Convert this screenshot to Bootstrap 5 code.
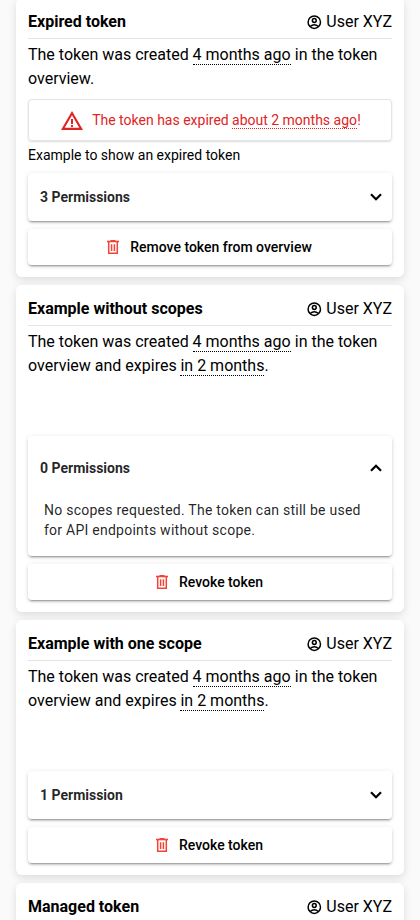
<!DOCTYPE html>
<html lang="en">
<head>
<meta charset="utf-8">
<meta name="viewport" content="width=device-width, initial-scale=1">
<title>Tokens</title>
<link href="https://cdn.jsdelivr.net/npm/bootstrap@5.3.0/dist/css/bootstrap.min.css" rel="stylesheet">
<style>
  html, body { height: 920px; overflow: hidden; }
  body { background: #fafafa; color: #000; font-family: Roboto, "Liberation Sans", sans-serif; font-size: 16px; line-height: 24px; }
  .token-list { margin-top: -2px; }
  .token { border: 0; border-radius: 6px; padding: 12px; color: #000; background: #fff; box-shadow: 0 3px 8px rgba(0,0,0,.12); }
  .token-head { border-bottom: 1px solid #e4e4e4; }
  .token-title { font-size: 16px; line-height: 24px; font-weight: 700; }
  .when { border-bottom: 1px dotted currentColor; margin-left: -.2px; margin-right: .2px; }
  .summary { min-height: 98px; }
  .summary-short { min-height: 48px; }
  .expired { height: 42px; padding-left: 2px; border: 1px solid #e4e4e6; border-radius: 4px; color: #df2424; font-size: 14px; line-height: 20px; box-shadow: 0 1px 2px rgba(0,0,0,.14); }
  .alert-icon { margin-right: 9px; }
  .note { font-size: 14px; line-height: 20px; }
  .raised { background: #fff; border-radius: 4px; box-shadow: 0 3px 1px -2px rgba(0,0,0,.2), 0 2px 2px 0 rgba(0,0,0,.14), 0 1px 5px 0 rgba(0,0,0,.12); }
  .perm-head { height: 48px; padding: 0 10px 0 12px; font-size: 14px; font-weight: 700; color: rgba(0,0,0,.87); }
  .perm-head.open { height: 64px; }
  .perm-head.open svg { transform: rotate(180deg); }
  .perm-body { padding: 0 16px 16px; font-size: 14px; line-height: 20px; letter-spacing: .25px; color: rgba(0,0,0,.87); }
  .action { height: 36px; border: 0; padding: 0; font-size: 14px; line-height: 36px; font-weight: 500; color: #000; }
  .action svg { margin-left: -1px; margin-right: 11px; }
  svg { display: block; flex: none; }
</style>
<script src="https://cdn.jsdelivr.net/npm/bootstrap@5.3.0/dist/js/bootstrap.bundle.min.js"></script>
</head>
<body>
<svg width="0" height="0" class="position-absolute" aria-hidden="true">
  <symbol id="user" viewBox="0 0 16 16"><g fill="none" stroke="#000" stroke-width="1.500"><circle cx="8.300" cy="8.200" r="6.200"/><circle cx="8.300" cy="6.500" r="1.900"/><path d="M4.100 12.500Q8.300 9.100 12.500 12.500"/></g></symbol>
  <symbol id="trash" viewBox="0 0 12 14"><path d="M0 1.500h12" fill="none" stroke="#f44336" stroke-width="1.600"/><path d="M3.500.5h5M1.700 2v11.200h8.600V2M4.600 4.200v6.800M7.400 4.200v6.800" fill="none" stroke="#f44336" stroke-width="1.500"/></symbol>
  <symbol id="chevron" viewBox="0 0 12 8"><path d="M1 1.300l5 5 5-5" fill="none" stroke="#000" stroke-width="2.200"/></symbol>
  <symbol id="alert" viewBox="0 0 22 19"><path d="M11 0l11 19H0zM11 4.200L3.700 16.800h14.600z" fill-rule="evenodd"/><path d="M10 8h2v5h-2zM10 14h2v2h-2z"/></symbol>
</svg>
<main class="token-list d-flex flex-column gap-2 px-3">
  <article class="card token">
    <header class="token-head d-flex justify-content-between pb-1 mb-1">
      <h2 class="token-title mb-0">Expired token</h2>
      <span class="d-flex align-items-center gap-1"><svg width="16" height="16"><use href="#user"/></svg>User XYZ</span>
    </header>
    <p class="summary-short mb-2">The token was created <span class="when">4 months ago</span> in the token overview.</p>
    <div class="expired d-flex align-items-center justify-content-center mb-1">
      <svg class="alert-icon" width="22" height="19" fill="#df2424"><use href="#alert"/></svg>
      <span>The token has expired <span class="when">about 2 months ago</span>!</span>
    </div>
    <p class="note mb-2">Example to show an expired token</p>
    <section class="raised mb-2">
      <div class="perm-head d-flex align-items-center justify-content-between">3 Permissions <svg width="12" height="8"><use href="#chevron"/></svg></div>
    </section>
    <button class="btn action raised d-flex align-items-center justify-content-center"><svg width="12" height="14"><use href="#trash"/></svg>Remove token from overview</button>
  </article>

  <article class="card token">
    <header class="token-head d-flex justify-content-between pb-1 mb-1">
      <h2 class="token-title mb-0">Example without scopes</h2>
      <span class="d-flex align-items-center gap-1"><svg width="16" height="16"><use href="#user"/></svg>User XYZ</span>
    </header>
    <p class="summary mb-2">The token was created <span class="when">4 months ago</span> in the token overview and expires <span class="when">in 2 months</span>.</p>
    <section class="raised mb-2">
      <div class="perm-head open d-flex align-items-center justify-content-between">0 Permissions <svg width="12" height="8"><use href="#chevron"/></svg></div>
      <div class="perm-body">No scopes requested. The token can still be used for API endpoints without scope.</div>
    </section>
    <button class="btn action raised d-flex align-items-center justify-content-center"><svg width="12" height="14"><use href="#trash"/></svg>Revoke token</button>
  </article>

  <article class="card token">
    <header class="token-head d-flex justify-content-between pb-1 mb-1">
      <h2 class="token-title mb-0">Example with one scope</h2>
      <span class="d-flex align-items-center gap-1"><svg width="16" height="16"><use href="#user"/></svg>User XYZ</span>
    </header>
    <p class="summary mb-2">The token was created <span class="when">4 months ago</span> in the token overview and expires <span class="when">in 2 months</span>.</p>
    <section class="raised mb-2">
      <div class="perm-head d-flex align-items-center justify-content-between">1 Permission <svg width="12" height="8"><use href="#chevron"/></svg></div>
    </section>
    <button class="btn action raised d-flex align-items-center justify-content-center"><svg width="12" height="14"><use href="#trash"/></svg>Revoke token</button>
  </article>

  <article class="card token">
    <header class="token-head d-flex justify-content-between pb-1 mb-1">
      <h2 class="token-title mb-0">Managed token</h2>
      <span class="d-flex align-items-center gap-1"><svg width="16" height="16"><use href="#user"/></svg>User XYZ</span>
    </header>
  </article>
</main>
</body>
</html>
